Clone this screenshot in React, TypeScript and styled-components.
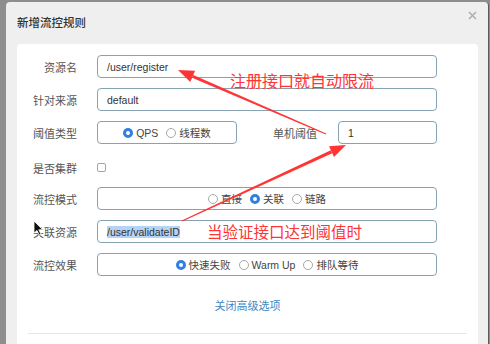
import styled, { createGlobalStyle } from "styled-components";

const GlobalStyle = createGlobalStyle`
  html, body {
    margin: 0;
    padding: 0;
    background: #8e8e8e;
    overflow: hidden;
  }
  body {
    font-family: "Liberation Sans", "Noto Sans CJK SC", sans-serif;
  }
`

const Page = styled.div`
  position: relative;
  width: 490px;
  height: 344px;
  overflow: hidden;
  padding: 2px 0 0 6px;
  box-sizing: border-box;
`

const Modal = styled.div`
  width: 483px;
  height: 360px;
  background: #efefef;
  border-radius: 4px 4px 0 0;
  border-right: 1px solid #5a5a5a;
  box-sizing: border-box;
  display: flex;
  flex-direction: column;
`

const Header = styled.div`
  height: 42px;
  display: flex;
  align-items: center;
  justify-content: space-between;
  padding: 0 8px 0 11px;
  box-sizing: border-box;
`

const Title = styled.span`
  font-size: 11.5px;
  color: #333;
  font-weight: 500;
  margin-top: -3px;
`

const Close = styled.span`
  width: 9px;
  height: 9px;
  margin-top: -15px;
  margin-right: 3px;
  display: flex;
`

const Card = styled.div`
  margin: 0 10px 0 11px;
  flex: 1;
  background: #fff;
  border-radius: 4px 4px 0 0;
  padding-top: 11px;
  display: flex;
  flex-direction: column;
`

const Form = styled.div`
  display: flex;
  flex-direction: column;
  gap: 10px;
`

const Row = styled.div<{ $shift?: number }>`
  display: flex;
  align-items: center;
  height: 23px;
  padding-top: ${p => p.$shift || 0}px;
  box-sizing: border-box;
`

const Label = styled.span<{ $w?: number; $gap?: number }>`
  width: ${p => p.$w || 60}px;
  text-align: right;
  margin-right: ${p => p.$gap || 20}px;
  font-size: 11px;
  color: #555;
  flex-shrink: 0;
`

const Input = styled.div<{ $w?: number }>`
  width: ${p => p.$w || 340}px;
  height: 23px;
  box-sizing: border-box;
  border: 1px solid #86a3b2;
  border-radius: 4px;
  padding-left: 9px;
  display: flex;
  align-items: center;
  font-size: 10.5px;
  color: #333;
`

const Selected = styled.span`
  background: #b4d3f5;
`

const RadioBox = styled.div<{ $w?: number }>`
  width: ${p => p.$w || 340}px;
  height: 23px;
  box-sizing: border-box;
  border: 1px solid #86a3b2;
  border-radius: 4px;
  display: flex;
  align-items: center;
  justify-content: center;
  gap: 8px;
`

const RadioItem = styled.span`
  display: flex;
  align-items: center;
  gap: 3px;
  font-size: 10.5px;
  color: #444;
`

const Dot = styled.span<{ $on?: boolean }>`
  width: 10px;
  height: 10px;
  border-radius: 50%;
  box-sizing: border-box;
  border: ${p => (p.$on ? "3px solid #2f80e0" : "1px solid #a8a8a8")};
  background: #fff;
  flex-shrink: 0;
`

const Check = styled.span`
  width: 9px;
  height: 9px;
  border: 1px solid #a5a5a5;
  border-radius: 2px;
  box-sizing: border-box;
`

const Link = styled.div`
  margin-top: 23px;
  text-align: center;
  font-size: 11px;
  line-height: 14px;
  color: #3d88c6;
`

const Divider = styled.div`
  margin: 20px 11px 0;
  border-top: 1px solid #e6e6e6;
`

const Note = styled.div<{ $x: number; $y: number; $size: number }>`
  position: absolute;
  left: ${p => p.$x}px;
  top: ${p => p.$y}px;
  font-size: ${p => p.$size}px;
  line-height: ${p => p.$size}px;
  color: #ff3535;
  font-family: "Noto Sans CJK SC", sans-serif;
  white-space: nowrap;
`

const Overlay = styled.svg`
  position: absolute;
  left: 0;
  top: 0;
`

const Radio = ({ label, on }: { label: string; on?: boolean }) => (
  <RadioItem>
    <Dot $on={on} />
    {label}
  </RadioItem>
)

const App = () => {
  return (
    <Page>
      <GlobalStyle />
      <Modal>
        <Header>
          <Title>新增流控规则</Title>
          <Close>
            <svg width="9" height="9" viewBox="0 0 9 9">
              <path d="M1 1 L8 8 M8 1 L1 8" stroke="#b0b0b0" strokeWidth="1.6" />
            </svg>
          </Close>
        </Header>
        <Card>
          <Form>
            <Row>
              <Label>资源名</Label>
              <Input>/user/register</Input>
            </Row>
            <Row>
              <Label>针对来源</Label>
              <Input>default</Input>
            </Row>
            <Row>
              <Label>阈值类型</Label>
              <RadioBox $w={140}>
                <Radio label="QPS" on />
                <Radio label="线程数" />
              </RadioBox>
              <Label $w={80} $gap={21}>单机阈值</Label>
              <Input $w={99}>1</Input>
            </Row>
            <Row $shift={4}>
              <Label>是否集群</Label>
              <Check />
            </Row>
            <Row>
              <Label>流控模式</Label>
              <RadioBox>
                <Radio label="直接" />
                <Radio label="关联" on />
                <Radio label="链路" />
              </RadioBox>
            </Row>
            <Row>
              <Label>关联资源</Label>
              <Input><Selected>/user/validateID</Selected></Input>
            </Row>
            <Row>
              <Label>流控效果</Label>
              <RadioBox>
                <Radio label="快速失败" on />
                <Radio label="Warm Up" />
                <Radio label="排队等待" />
              </RadioBox>
            </Row>
          </Form>
          <Link>关闭高级选项</Link>
          <Divider />
        </Card>
      </Modal>

      <Note $x={230} $y={72} $size={16}>注册接口就自动限流</Note>
      <Note $x={207} $y={224} $size={15.5}>当验证接口达到阈值时</Note>

      <Overlay width="490" height="344" viewBox="0 0 490 344">
        <polygon points="326.2,133.5 325.8,134.5 192.1,77.8 193.3,74.9" fill="#ff3535" />
        <polygon points="178,70 195.1,70.8 190.3,81.9" fill="#ff3535" />
        <polygon points="182.25,221.5 181.75,220.5 330.8,150.2 332.2,153.2" fill="#ff3535" />
        <polygon points="346,145 334,157.1 329,146.3" fill="#ff3535" />
        <path
          d="M34 221 L34 233 L37 230.5 L39.3 235 L41 234.2 L38.8 229.8 L42.5 229.6 Z"
          fill="#111"
          stroke="#fff"
          strokeWidth="0.8"
        />
      </Overlay>
    </Page>
  )
}

export default App;
